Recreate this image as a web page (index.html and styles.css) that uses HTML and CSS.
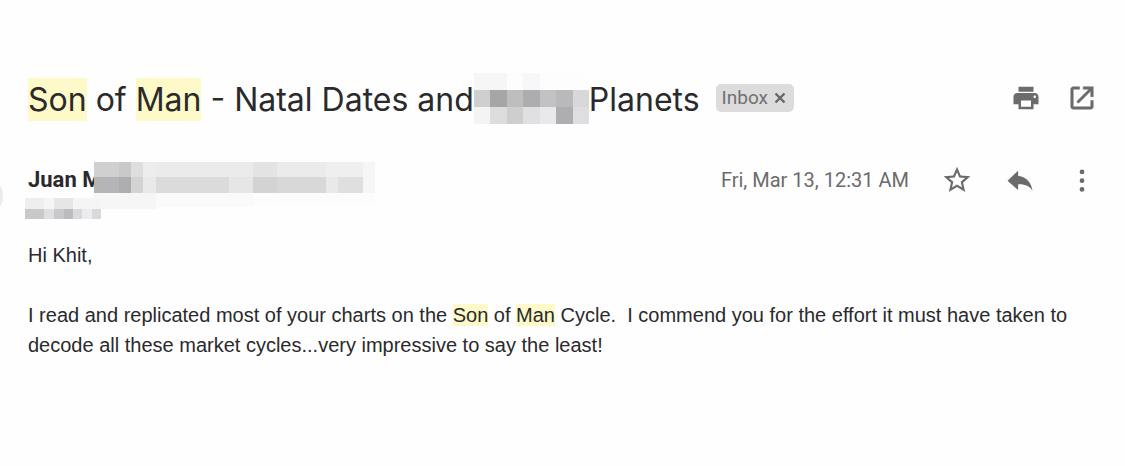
FILE: index.html
```html
<!DOCTYPE html>
<html lang="en">
<head>
<meta charset="UTF-8">
<title>Son of Man - Natal Dates</title>
<link rel="stylesheet" href="styles.css">
</head>
<body>

<main class="message">
  <span class="avatar"></span>

  <header class="subject-row">
    <h1 class="subject">
      <span class="subject-text"><mark>Son</mark> of <mark>Man</mark> - Natal Dates and</span>
      <svg class="redacted" width="115" height="51" viewBox="0 0 115 51" shape-rendering="crispEdges" aria-hidden="true">
        <rect width="115" height="17" fill="#fdfdfd"/>
        <rect width="33" height="17" fill="#f6f6f7"/>
        <rect x="49" width="17" height="17" fill="#f7f7f9"/>
        <rect y="17" width="17" height="17" fill="#cfcfd0"/>
        <rect x="16" y="17" width="17" height="17" fill="#a6a6a9"/>
        <rect x="33" y="17" width="16" height="17" fill="#bebebf"/>
        <rect x="49" y="17" width="17" height="17" fill="#adadb0"/>
        <rect x="66" y="17" width="16" height="17" fill="#c2c2c3"/>
        <rect x="82" y="17" width="17" height="17" fill="#b9b9bb"/>
        <rect x="99" y="17" width="16" height="17" fill="#d8d8d9"/>
        <rect y="34" width="16" height="17" fill="#f4f4f5"/>
        <rect x="16" y="34" width="17" height="17" fill="#dddddd"/>
        <rect x="33" y="34" width="16" height="17" fill="#cecece"/>
        <rect x="49" y="34" width="17" height="17" fill="#e0e0e3"/>
        <rect x="66" y="34" width="16" height="17" fill="#e9e9ed"/>
        <rect x="82" y="34" width="17" height="17" fill="#aeaeb0"/>
        <rect x="99" y="34" width="16" height="17" fill="#dedee0"/>
      </svg>
      <span class="subject-text">Planets</span>
    </h1>
    <span class="label">Inbox
      <button class="label-remove" aria-label="Remove label Inbox">
        <svg width="12" height="12" viewBox="0 0 12 12"><path d="M1.500 1.500l9 9M10.500 1.500l-9 9" stroke="#666" stroke-width="2.400"/></svg>
      </button>
    </span>
    <div class="actions">
      <button class="icon-btn" aria-label="Print all">
        <svg width="30" height="30" viewBox="0 0 24 24" fill="#6b6b6b"><path d="M19 8H5c-1.66 0-3 1.34-3 3v6h4v4h12v-4h4v-6c0-1.66-1.34-3-3-3zm-3 11H8v-5h8v5zm3-7c-.55 0-1-.45-1-1s.45-1 1-1 1 .45 1 1-.45 1-1 1zm-1-9H6v4h12V3z"/></svg>
      </button>
      <button class="icon-btn" aria-label="In new window">
        <svg width="30" height="30" viewBox="0 0 24 24" fill="#6b6b6b" stroke="#6b6b6b" stroke-width="0.4"><path d="M19 19H5V5h5V3H5c-1.110 0-2 .9-2 2v14c0 1.100.89 2 2 2h14c1.100 0 2-.9 2-2v-5h-2v5zM13 3v2h4.590l-9.830 9.830 1.410 1.410L19 6.410V11h2V3h-8z"/></svg>
      </button>
    </div>
  </header>

  <div class="sender-row">
    <div class="sender">
      <strong class="name">Juan M</strong>
      <svg class="redacted-name" width="281" height="48" viewBox="0 0 281 48" shape-rendering="crispEdges" aria-hidden="true">
        <rect width="281" height="15" fill="#ebebeb"/>
        <rect width="25" height="15" fill="#d0d0d0"/>
        <rect x="25" width="12" height="15" fill="#c9c9c9"/>
        <rect x="37" width="12" height="15" fill="#dedede"/>
        <rect x="49" width="13" height="15" fill="#ededed"/>
        <rect x="159" width="24" height="15" fill="#e3e3e3"/>
        <rect x="232" width="37" height="15" fill="#efefef"/>
        <rect x="269" width="12" height="31" fill="#f6f6f6"/>
        <rect y="15" width="25" height="16" fill="#b5b5b7"/>
        <rect x="25" y="15" width="12" height="16" fill="#aeaeb0"/>
        <rect x="37" y="15" width="12" height="16" fill="#d3d3d4"/>
        <rect x="49" y="15" width="13" height="16" fill="#e9e9ea"/>
        <rect x="62" y="15" width="73" height="16" fill="#dbdbdb"/>
        <rect x="135" y="15" width="24" height="16" fill="#e6e6e6"/>
        <rect x="159" y="15" width="24" height="16" fill="#d3d3d3"/>
        <rect x="183" y="15" width="49" height="16" fill="#d8d8d8"/>
        <rect x="232" y="15" width="12" height="16" fill="#e9e9e9"/>
        <rect x="244" y="15" width="25" height="16" fill="#dfdfdf"/>
        <rect y="31" width="62" height="16" fill="#f6f6f6"/>
        <rect x="62" y="31" width="97" height="14" fill="#fafafa"/>
        <rect x="159" y="31" width="122" height="12" fill="#fcfcfc"/>
      </svg>
    </div>
    <time class="date">Fri, Mar 13, 12:31 AM</time>
    <div class="actions">
      <button class="icon-btn" aria-label="Star">
        <svg width="32" height="32" viewBox="0 0 24 24" fill="#6b6b6b"><path d="M22 9.24l-7.19-.62L12 2 9.19 8.63 2 9.24l5.46 4.73L5.82 21 12 17.27 18.18 21l-1.63-7.03L22 9.24zM12 15.4l-3.76 2.27 1-4.28-3.32-2.88 4.38-.38L12 6.1l1.71 4.04 4.38.38-3.32 2.88 1 4.28L12 15.4z"/></svg>
      </button>
      <button class="icon-btn" aria-label="Reply">
        <svg width="30" height="30" viewBox="0 0 24 24" fill="#6b6b6b"><path d="M10.500 8.500V4.500L2 12.500l8.500 7.500v-4.500c5.500-.3 9 1.500 11.500 5-1-6.500-4.500-11-11.500-12z"/></svg>
      </button>
      <button class="icon-btn" aria-label="More">
        <svg width="30" height="30" viewBox="0 0 24 24" fill="#6b6b6b"><circle cx="12" cy="5.500" r="1.900"/><circle cx="12" cy="12.500" r="1.900"/><circle cx="12" cy="19.500" r="1.900"/></svg>
      </button>
    </div>
  </div>

  <svg class="redacted-to" width="76" height="21" viewBox="0 0 76 21" shape-rendering="crispEdges" aria-hidden="true">
    <rect width="76" height="11" fill="#f5f5f6"/>
    <rect width="19" height="11" fill="#eeeeef"/>
    <rect x="29" width="19" height="11" fill="#e6e6e8"/>
    <rect y="11" width="19" height="10" fill="#c9c9ca"/>
    <rect x="19" y="11" width="10" height="10" fill="#dfdfe2"/>
    <rect x="29" y="11" width="10" height="10" fill="#c9c9cb"/>
    <rect x="39" y="11" width="9" height="10" fill="#bcbcbe"/>
    <rect x="48" y="11" width="9" height="10" fill="#dadadd"/>
    <rect x="57" y="11" width="10" height="10" fill="#ececef"/>
    <rect x="67" y="11" width="9" height="10" fill="#d9d9db"/>
  </svg>

  <div class="body">
    <p>Hi Khit,</p>
    <p>I read and replicated most of your charts on the <mark>Son</mark> of <mark>Man</mark> Cycle.&nbsp; I commend you for the effort it must have taken to decode all these market cycles...very impressive to say the least!</p>
  </div>
</main>

</body>
</html>
```
FILE: styles.css
```css
body {
  margin: 0;
  background: #fefefe;
  color: #2a2a2c;
  font-family: Roboto, "Liberation Sans", sans-serif;
}

.message {
  position: relative;
  padding: 71px 28px 40px;
}

/* sender picture, cut off by the left edge */
.avatar {
  position: absolute;
  left: -37px;
  top: 176px;
  width: 40px;
  height: 40px;
  border-radius: 50%;
  background: #ebebeb;
}

mark {
  background: #fdf9c8;
  color: inherit;
}

.subject-row,
.sender-row {
  display: flex;
  align-items: center;
}

.subject-row {
  min-height: 54px;
}

.subject {
  display: flex;
  align-items: center;
  margin: 0;
  font-family: Inter, sans-serif;
  font-size: 32px;
  font-weight: 400;
  line-height: 44px;
  white-space: nowrap;
}

.subject-text {
  padding-top: 4px;
}

.subject mark {
  padding: 2px 0;
}

.redacted {
  align-self: flex-start;
  flex: none;
}

.label {
  display: flex;
  align-items: center;
  gap: 6px;
  margin-left: 16px;
  padding: 0 8px 0 6px;
  border-radius: 5px;
  background: #dcdcdc;
  color: #707070;
  font-size: 19px;
  line-height: 28px;
}

button {
  display: flex;
  padding: 0;
  border: none;
  background: none;
  cursor: pointer;
}

.actions {
  display: flex;
  align-items: center;
  gap: 26px;
  margin-left: auto;
}

.sender-row {
  height: 36px;
  margin-top: 37px;
}

.sender {
  display: flex;
  align-items: center;
  height: 36px;
}

.name {
  width: 66px;
  font-size: 22px;
  font-weight: 700;
  line-height: 36px;
  white-space: nowrap;
}

/* opaque blocks lie over the rest of the name */
.redacted-name {
  position: relative;
  align-self: flex-start;
  flex: none;
}

.date {
  margin-left: auto;
  color: #6b6b6b;
  font-size: 20px;
}

.sender-row .actions {
  gap: 32px;
  margin-left: 32px;
}

.redacted-to {
  display: block;
  position: relative;
  margin-left: -3px;
}

.body {
  margin-top: 21px;
  font-family: "Liberation Sans", Arial, sans-serif;
  font-size: 20px;
  line-height: 30px;
}

.body p {
  margin: 0 0 30px;
}
```
